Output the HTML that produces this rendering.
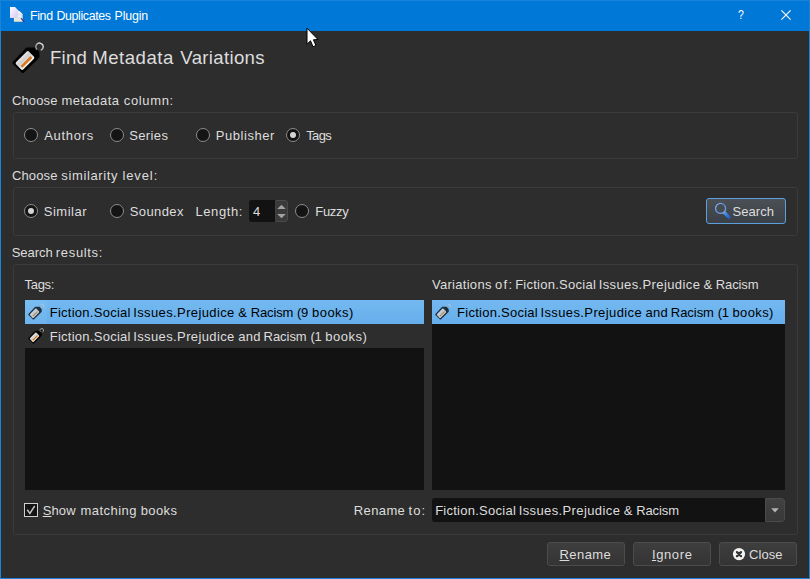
<!DOCTYPE html>
<html><head><meta charset="utf-8">
<style>
*{box-sizing:border-box;margin:0;padding:0}
html,body{width:810px;height:579px;overflow:hidden;background:#2d2d2d}
body{font-family:"Liberation Sans",sans-serif;font-size:13px;color:#ddd;position:relative}
.abs{position:absolute}
.t{position:absolute;white-space:nowrap}
.t u{text-decoration-thickness:1px;text-underline-offset:1px}
#titlebar{left:0;top:0;width:810px;height:31px;background:#0078d7;border-top:1px solid #1883d9;border-left:1px solid #1883d9;border-right:1px solid #1883d9}
#bl{left:0;top:31px;width:1px;height:548px;background:#1a84d8}
#br{left:809px;top:31px;width:1px;height:548px;background:#1a84d8}
#bb{left:0;top:578px;width:810px;height:1px;background:#1a84d8}
.gb{position:absolute;border:1px solid #3b3b3b;border-radius:2.5px}
.radio{position:absolute;width:14px;height:14px;border-radius:50%;background:#141414;border:1px solid #8c8c8c}
.radio.on::after{content:"";position:absolute;left:3px;top:3px;width:6px;height:6px;border-radius:50%;background:#d4d4d4}
.list{position:absolute;background:#121212}
.row{position:absolute;left:0;height:24px}
.btn{position:absolute;border:1px solid #4c4c4c;border-radius:3px;background:linear-gradient(#3e3e3e,#343434)}
</style></head><body>
<div class="abs" id="titlebar"></div>
<div class="abs" id="bl"></div><div class="abs" id="br"></div><div class="abs" id="bb"></div>

<!-- title icon -->
<svg class="abs" style="left:9px;top:7px;overflow:visible" width="17" height="17" viewBox="0 0 17 17">
 <defs><linearGradient id="docg" x1="0" y1="0" x2="1" y2="1"><stop offset="0" stop-color="#ffffff"/><stop offset=".45" stop-color="#ece4fc"/><stop offset="1" stop-color="#d3c4f3"/></linearGradient>
 <linearGradient id="docg2" x1="0" y1="0" x2="0" y2="1"><stop offset="0" stop-color="#f8f5ea"/><stop offset="1" stop-color="#ebe4cf"/></linearGradient></defs>
 <path d="M4.9 4h5.6l3.1 3.1V14.8H4.9z" fill="url(#docg2)"/>
 <path d="M1 0h5l3.2 3.2V11H1z" fill="url(#docg)"/>
 <circle cx="10.3" cy="9.3" r="2.4" fill="#e3ecf7" fill-opacity=".9" stroke="#d4d8ee" stroke-width=".7"/>
 <path d="M12.3 11.6L15 14.3" stroke="#5a2a8e" stroke-width="1.2" stroke-linecap="round"/>
</svg>
<!-- close X -->
<svg class="abs" style="left:781px;top:10px" width="10" height="10" viewBox="0 0 10 10"><path d="M0.4 0.4L9.6 9.6M9.6 0.4L0.4 9.6" stroke="#fff" stroke-width="1.15" fill="none"/></svg>

<!-- header tag icon 32x32 -->
<svg class="abs" style="left:12px;top:42px;overflow:visible" width="32" height="32" viewBox="0 0 32 32">
 <defs>
  <linearGradient id="lblg" x1="0" y1="0" x2="0" y2="1"><stop offset="0" stop-color="#e8e8e8"/><stop offset=".35" stop-color="#cfcfcf"/><stop offset="1" stop-color="#f4f4f4"/></linearGradient>
  <linearGradient id="ringg" x1="0" y1="1" x2="1" y2="0"><stop offset="0" stop-color="#7d7d7d"/><stop offset="1" stop-color="#e6e6e6"/></linearGradient>
 </defs>
 <g id="tagicon">
 <path d="M14.3 5.6 L23.4 5.6 L27.3 9.8 L27.5 14.8 Q27.5 15.4 27 15.9 L12.1 30.6 Q10.9 31.7 9.7 30.6 L0.9 22 Q-0.1 20.9 0.9 19.8 Z" fill="#020202"/>
 <g transform="rotate(-45 13 18.5)">
  <rect x="3.9" y="13.4" width="18.2" height="10.2" rx="1.8" fill="url(#lblg)"/>
  <rect x="6" y="19.2" width="14" height="2.6" rx=".4" fill="#dc761a"/>
 </g>
 <path d="M25.2 7.7 A3.7 3.7 0 1 1 28.7 8.3" fill="none" stroke="url(#ringg)" stroke-width="1.5"/>
 </g>
</svg>

<div class="gb" style="left:13px;top:112px;width:785px;height:47px"></div>
<div class="radio" style="left:24px;top:128px"></div>
<div class="radio" style="left:110px;top:128px"></div>
<div class="radio" style="left:196px;top:128px"></div>
<div class="radio on" style="left:286px;top:128px"></div>

<div class="gb" style="left:13px;top:187px;width:785px;height:49px"></div>
<div class="radio on" style="left:24px;top:204px"></div>
<div class="radio" style="left:110px;top:204px"></div>
<!-- spinbox -->
<div class="abs" style="left:249px;top:200px;width:39px;height:22px;background:#121212;border-radius:3px"></div>
<div class="abs" style="left:275px;top:200px;width:13px;height:22px;background:#3a3a3a;border:1px solid #4a4a4a;border-left-color:#3f3f3f;border-radius:0 3px 3px 0"></div>
<svg class="abs" style="left:277px;top:204px" width="9" height="15" viewBox="0 0 9 15"><path d="M0.2 5L4.5 0.8L8.8 5Z M0.2 10L4.5 14.2L8.8 10Z" fill="#a2a2a2"/></svg>
<div class="radio" style="left:295px;top:204px"></div>
<!-- search button -->
<div class="btn" id="search" style="left:706px;top:198px;width:80px;height:26px;border-color:#5b9fdc;background:linear-gradient(#4b5056,#3b4047)"></div>
<svg class="abs" style="left:714px;top:202px" width="18" height="18" viewBox="0 0 18 18">
 <defs><linearGradient id="hg" gradientUnits="userSpaceOnUse" x1="9" y1="9" x2="16" y2="16"><stop offset="0" stop-color="#6fa3ea"/><stop offset="1" stop-color="#165bce"/></linearGradient>
 <linearGradient id="rg" x1="0" y1="0" x2="1" y2="1"><stop offset="0" stop-color="#8db4ec"/><stop offset=".5" stop-color="#5f8fda"/><stop offset="1" stop-color="#7aa6e6"/></linearGradient></defs>
 <path d="M9.6 9.8L14.9 15.1" stroke="url(#hg)" stroke-width="3.3" stroke-linecap="round"/>
 <circle cx="6.6" cy="6.4" r="5" fill="#454b52" stroke="url(#rg)" stroke-width="1.35"/>
</svg>

<div class="gb" style="left:13px;top:264px;width:785px;height:271px"></div>

<div class="list" style="left:25px;top:300px;width:399px;height:190px">
 <div class="row" style="top:0;width:399px;background:linear-gradient(#74b9f0,#66aeec)"></div>
 <div class="row" style="top:0;width:22px;background:linear-gradient(#7abdf1,#6eb3ed)"></div>
 <div class="row" style="top:24px;width:399px;background:#2d2d2d"></div>
</div>
<div class="list" style="left:432px;top:300px;width:353px;height:190px">
 <div class="row" style="top:0;width:353px;background:linear-gradient(#74b9f0,#66aeec)"></div>
</div>
<svg class="abs" style="left:28px;top:304px;opacity:.75" width="16" height="16" viewBox="0 0 32 32"><use href="#tagicon"/></svg>
<svg class="abs" style="left:28px;top:328px" width="16" height="16" viewBox="0 0 32 32"><use href="#tagicon"/></svg>
<svg class="abs" style="left:435px;top:304px;opacity:.75" width="16" height="16" viewBox="0 0 32 32"><use href="#tagicon"/></svg>

<!-- checkbox -->
<div class="abs" style="left:24px;top:503px;width:14px;height:14px;border:1px solid #d0d0d0;background:#141414"></div>
<svg class="abs" style="left:24px;top:503px" width="14" height="14" viewBox="0 0 14 14"><path d="M3.2 6.8L5.9 10.4L10.7 3" stroke="#c4c4c4" stroke-width="1.5" fill="none"/></svg>
<!-- combo -->
<div class="abs" style="left:431.5px;top:498px;width:353.5px;height:24px;background:#121212;border-radius:3px"></div>
<div class="abs" style="left:765px;top:498px;width:20px;height:24px;background:linear-gradient(#424242,#383838);border:1px solid #4b4b4b;border-radius:0 3px 3px 0"></div>
<svg class="abs" style="left:770.5px;top:508px" width="8" height="5" viewBox="0 0 8 5"><path d="M0.3 0.3L7.7 0.3L4 4.5Z" fill="#b4b4b4"/></svg>

<div class="btn" style="left:547px;top:542px;width:78px;height:24px"></div>
<div class="btn" style="left:633px;top:542px;width:78px;height:24px"></div>
<div class="btn" style="left:719px;top:542px;width:78px;height:24px"></div>
<svg class="abs" style="left:732px;top:548px" width="14" height="14" viewBox="0 0 14 14"><circle cx="7" cy="6.1" r="6.1" fill="#f4f4f4"/><path d="M5 4.1L9 8.1M9 4.1L5 8.1" stroke="#333" stroke-width="2.3" stroke-linecap="round"/></svg>

<div class="t" id="q" style="left:738px;top:7.4px;font-size:13.5px;line-height:16px;color:#fff;transform:scaleX(.78);transform-origin:0 0">?</div>
<div class="t" style="left:29.93px;top:9.50px;font-size:12.4px;line-height:12.4px;color:#ffffff;letter-spacing:-0.333px">Find</div>
<div class="t" style="left:56.50px;top:9.50px;font-size:12.4px;line-height:12.4px;color:#ffffff;letter-spacing:-0.375px">Duplicates</div>
<div class="t" style="left:114.62px;top:9.50px;font-size:12.4px;line-height:12.4px;color:#ffffff;letter-spacing:-0.193px">Plugin</div>
<div class="t" style="left:49.93px;top:48.86px;font-size:18.6px;line-height:18.6px;color:#dddddd;letter-spacing:0.238px">Find</div>
<div class="t" style="left:92.25px;top:48.86px;font-size:18.6px;line-height:18.6px;color:#dddddd;letter-spacing:0.495px">Metadata</div>
<div class="t" style="left:180.30px;top:48.86px;font-size:18.6px;line-height:18.6px;color:#dddddd;letter-spacing:0.330px">Variations</div>
<div class="t" style="left:12.00px;top:94.30px;font-size:13px;line-height:13px;color:#dddddd;letter-spacing:0.115px">Choose</div>
<div class="t" style="left:61.38px;top:94.30px;font-size:13px;line-height:13px;color:#dddddd;letter-spacing:0.494px">metadata</div>
<div class="t" style="left:123.76px;top:94.30px;font-size:13px;line-height:13px;color:#dddddd;letter-spacing:0.658px">column:</div>
<div class="t" style="left:44.26px;top:129.20px;font-size:13px;line-height:13px;color:#dddddd;letter-spacing:0.686px">Authors</div>
<div class="t" style="left:129.14px;top:129.20px;font-size:13px;line-height:13px;color:#dddddd;letter-spacing:0.398px">Series</div>
<div class="t" style="left:215.66px;top:129.20px;font-size:13px;line-height:13px;color:#dddddd;letter-spacing:0.569px">Publisher</div>
<div class="t" style="left:306.17px;top:129.20px;font-size:13px;line-height:13px;color:#dddddd;letter-spacing:-0.586px">Tags</div>
<div class="t" style="left:12.00px;top:169.00px;font-size:13px;line-height:13px;color:#dddddd;letter-spacing:0.115px">Choose</div>
<div class="t" style="left:61.24px;top:169.00px;font-size:13px;line-height:13px;color:#dddddd;letter-spacing:0.643px">similarity</div>
<div class="t" style="left:122.45px;top:169.00px;font-size:13px;line-height:13px;color:#dddddd;letter-spacing:0.897px">level:</div>
<div class="t" style="left:43.71px;top:205.00px;font-size:13px;line-height:13px;color:#dddddd;letter-spacing:0.520px">Similar</div>
<div class="t" style="left:129.71px;top:205.00px;font-size:13px;line-height:13px;color:#dddddd;letter-spacing:0.406px">Soundex</div>
<div class="t" style="left:195.52px;top:205.00px;font-size:13px;line-height:13px;color:#dddddd;letter-spacing:0.573px">Length:</div>
<div class="t" style="left:252.90px;top:205.00px;font-size:13px;line-height:13px;color:#dddddd;letter-spacing:0.000px">4</div>
<div class="t" style="left:315.31px;top:205.00px;font-size:13px;line-height:13px;color:#dddddd;letter-spacing:-0.315px">Fuzzy</div>
<div class="t" style="left:732.55px;top:204.70px;font-size:13px;line-height:13px;color:#dddddd;letter-spacing:0.052px">Search</div>
<div class="t" style="left:11.67px;top:245.80px;font-size:13px;line-height:13px;color:#dddddd;letter-spacing:-0.015px">Search</div>
<div class="t" style="left:55.87px;top:245.80px;font-size:13px;line-height:13px;color:#dddddd;letter-spacing:0.654px">results:</div>
<div class="t" style="left:24.62px;top:277.80px;font-size:13px;line-height:13px;color:#dddddd;letter-spacing:-0.351px">Tags:</div>
<div class="t" style="left:431.91px;top:278.00px;font-size:13px;line-height:13px;color:#dddddd;letter-spacing:0.296px">Variations</div>
<div class="t" style="left:495.01px;top:278.00px;font-size:13px;line-height:13px;color:#dddddd;letter-spacing:1.389px">of:</div>
<div class="t" style="left:515.13px;top:278.00px;font-size:13px;line-height:13px;color:#dddddd;letter-spacing:0.259px">Fiction.Social</div>
<div class="t" style="left:598.68px;top:278.00px;font-size:13px;line-height:13px;color:#dddddd;letter-spacing:0.387px">Issues.Prejudice</div>
<div class="t" style="left:703.56px;top:278.00px;font-size:13px;line-height:13px;color:#dddddd;letter-spacing:0.000px">&amp;</div>
<div class="t" style="left:715.86px;top:278.00px;font-size:13px;line-height:13px;color:#dddddd;letter-spacing:-0.131px">Racism</div>
<div class="t" style="left:49.68px;top:306.00px;font-size:13px;line-height:13px;color:#000000;letter-spacing:0.267px">Fiction.Social</div>
<div class="t" style="left:133.26px;top:306.00px;font-size:13px;line-height:13px;color:#000000;letter-spacing:0.380px">Issues.Prejudice</div>
<div class="t" style="left:238.35px;top:306.00px;font-size:13px;line-height:13px;color:#000000;letter-spacing:0.000px">&amp;</div>
<div class="t" style="left:250.68px;top:306.00px;font-size:13px;line-height:13px;color:#000000;letter-spacing:-0.120px">Racism</div>
<div class="t" style="left:296.98px;top:306.00px;font-size:13px;line-height:13px;color:#000000;letter-spacing:-0.219px">(9</div>
<div class="t" style="left:312.01px;top:306.00px;font-size:13px;line-height:13px;color:#000000;letter-spacing:0.468px">books)</div>
<div class="t" style="left:49.68px;top:330.20px;font-size:13px;line-height:13px;color:#dddddd;letter-spacing:0.267px">Fiction.Social</div>
<div class="t" style="left:133.26px;top:330.20px;font-size:13px;line-height:13px;color:#dddddd;letter-spacing:0.380px">Issues.Prejudice</div>
<div class="t" style="left:238.22px;top:330.20px;font-size:13px;line-height:13px;color:#dddddd;letter-spacing:0.308px">and</div>
<div class="t" style="left:263.54px;top:330.20px;font-size:13px;line-height:13px;color:#dddddd;letter-spacing:-0.033px">Racism</div>
<div class="t" style="left:310.52px;top:330.20px;font-size:13px;line-height:13px;color:#dddddd;letter-spacing:-0.361px">(1</div>
<div class="t" style="left:325.21px;top:330.20px;font-size:13px;line-height:13px;color:#dddddd;letter-spacing:0.534px">books)</div>
<div class="t" style="left:457.04px;top:306.00px;font-size:13px;line-height:13px;color:#000000;letter-spacing:0.258px">Fiction.Social</div>
<div class="t" style="left:540.40px;top:306.00px;font-size:13px;line-height:13px;color:#000000;letter-spacing:0.394px">Issues.Prejudice</div>
<div class="t" style="left:645.38px;top:306.00px;font-size:13px;line-height:13px;color:#000000;letter-spacing:0.365px">and</div>
<div class="t" style="left:670.86px;top:306.00px;font-size:13px;line-height:13px;color:#000000;letter-spacing:-0.053px">Racism</div>
<div class="t" style="left:717.79px;top:306.00px;font-size:13px;line-height:13px;color:#000000;letter-spacing:-0.269px">(1</div>
<div class="t" style="left:732.43px;top:306.00px;font-size:13px;line-height:13px;color:#000000;letter-spacing:0.390px">books)</div>
<div class="t" style="left:42.67px;top:503.80px;font-size:13px;line-height:13px;color:#dddddd;letter-spacing:0.151px"><u>S</u>how</div>
<div class="t" style="left:80.51px;top:503.80px;font-size:13px;line-height:13px;color:#dddddd;letter-spacing:0.449px">matching</div>
<div class="t" style="left:140.70px;top:503.80px;font-size:13px;line-height:13px;color:#dddddd;letter-spacing:0.379px">books</div>
<div class="t" style="left:353.86px;top:504.00px;font-size:13px;line-height:13px;color:#dddddd;letter-spacing:0.360px">Rename</div>
<div class="t" style="left:408.38px;top:504.00px;font-size:13px;line-height:13px;color:#dddddd;letter-spacing:1.175px">to:</div>
<div class="t" style="left:435.13px;top:504.00px;font-size:13px;line-height:13px;color:#dddddd;letter-spacing:0.259px">Fiction.Social</div>
<div class="t" style="left:518.68px;top:504.00px;font-size:13px;line-height:13px;color:#dddddd;letter-spacing:0.387px">Issues.Prejudice</div>
<div class="t" style="left:623.78px;top:504.00px;font-size:13px;line-height:13px;color:#dddddd;letter-spacing:0.000px">&amp;</div>
<div class="t" style="left:636.13px;top:504.00px;font-size:13px;line-height:13px;color:#dddddd;letter-spacing:-0.098px">Racism</div>
<div class="t" style="left:559.54px;top:547.80px;font-size:13px;line-height:13px;color:#dddddd;letter-spacing:0.428px"><u>R</u>ename</div>
<div class="t" style="left:651.90px;top:547.80px;font-size:13px;line-height:13px;color:#dddddd;letter-spacing:0.629px"><u>I</u>gnore</div>
<div class="t" style="left:749.12px;top:547.80px;font-size:13px;line-height:13px;color:#dddddd;letter-spacing:0.045px">Close</div>
<!-- mouse cursor -->
<svg class="abs" style="left:305.5px;top:26.9px;overflow:visible" width="14" height="22" viewBox="0 0 14 22"><path d="M1 1.2L1 17.2L4.5 13.8L7 19.7L10 18.5L7.4 12.8L12 12.5Z" fill="#fff" stroke="#000" stroke-width="1" stroke-linejoin="miter"/></svg>
</body></html>
